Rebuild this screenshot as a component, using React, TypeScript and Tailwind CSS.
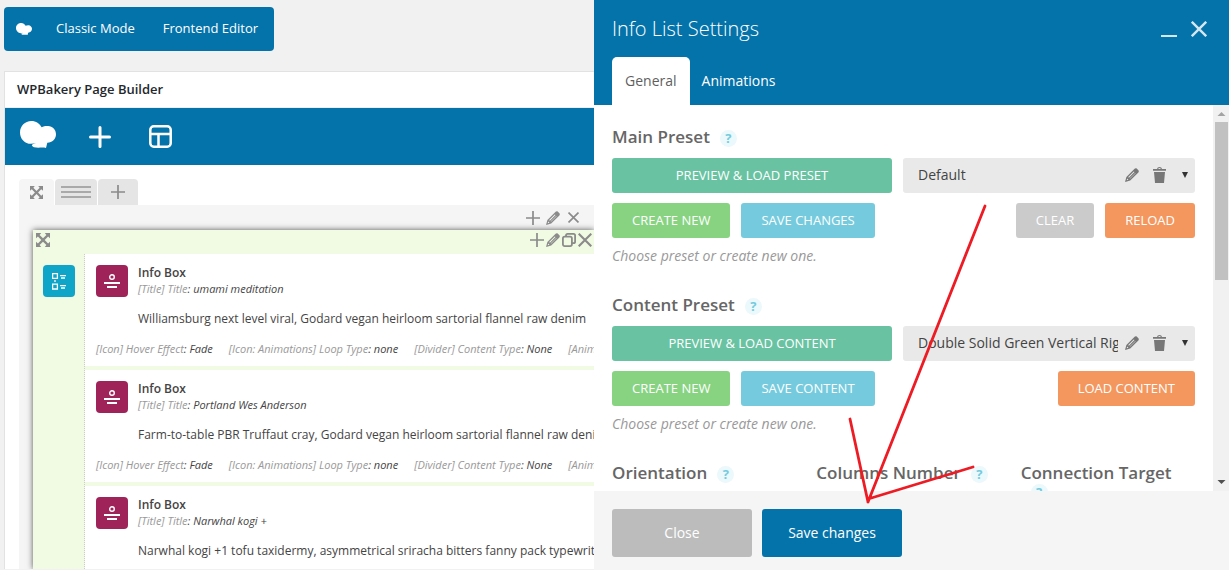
import type { ReactNode } from "react";

const infoBoxes = [
  {
    title: "umami meditation",
    text: "Williamsburg next level viral, Godard vegan heirloom sartorial flannel raw denim",
  },
  {
    title: "Portland Wes Anderson",
    text: "Farm-to-table PBR Truffaut cray, Godard vegan heirloom sartorial flannel raw denim",
  },
  {
    title: "Narwhal kogi +",
    text: "Narwhal kogi +1 tofu taxidermy, asymmetrical sriracha bitters fanny pack typewriter",
  },
];

const params = [
  { name: "[Icon] Hover Effect", value: "Fade" },
  { name: "[Icon: Animations] Loop Type", value: "none" },
  { name: "[Divider] Content Type", value: "None" },
  { name: "[Animations] Type", value: "none" },
];

function Logo({ className }: { className: string }) {
  return (
    <svg viewBox="0 0 36 27" fill="currentColor" className={className} aria-hidden="true">
      <path d="M11.3 0C16 0 19.800 2.600 21.600 6.200C23.500 5.100 25.600 4.800 28 4.900C32.600 5.200 36 8.600 36 13.200C36 18 32.300 21.600 27.300 21.800L26 27C22.500 25.900 18.500 27.300 14 26.200C12.400 25.700 11.600 24.800 12 23.800C13 22.700 14.800 22.500 16.300 21.700C14.800 22.400 13 22.800 11 22.800C4.800 22.800 0 17.700 0 11.400C0 5 5 0 11.300 0Z" />
    </svg>
  );
}

function PlusIcon({ className }: { className: string }) {
  return (
    <svg viewBox="0 0 14 14" className={className} fill="none" stroke="currentColor" strokeWidth="1.700" aria-hidden="true">
      <path d="M7 0V14M0 7H14" />
    </svg>
  );
}

function CloseIcon({ className }: { className: string }) {
  return (
    <svg viewBox="0 0 14 14" className={className} fill="none" stroke="currentColor" strokeWidth="2.100" aria-hidden="true">
      <path d="M.7.7L13.300 13.300M13.300.7L.7 13.300" />
    </svg>
  );
}

function PencilIcon({ className }: { className: string }) {
  return (
    <svg viewBox="0 0 14 14" className={className} aria-hidden="true">
      <path
        fill="currentColor"
        fillRule="evenodd"
        d="M9.600.7C10.300 0 11 0 11.700.6L13.400 2.300C14 3 14 3.700 13.400 4.400L5.200 12.500L0 14L1.400 8.900ZM8.800 3.400L3.200 9L3.900 9.700L9.500 4.100ZM10.300 4.900L4.700 10.500L5 10.800L10.600 5.200ZM2.200 10.500L1.700 12.300L3.500 11.800Z"
      />
    </svg>
  );
}

function CopyIcon({ className }: { className: string }) {
  return (
    <svg viewBox="0 0 14 14" className={className} fill="none" stroke="currentColor" strokeWidth="1.800" aria-hidden="true">
      <rect x="0.900" y="3.600" width="9" height="9.500" rx="1.800" />
      <path d="M4 3.500V2.500Q4 .9 5.600.9H11.500Q13.100.9 13.100 2.500V8.500Q13.100 10.200 11.500 10.200H10" />
    </svg>
  );
}

function TrashIcon({ className }: { className: string }) {
  return (
    <svg viewBox="0 0 13 16" className={className} aria-hidden="true">
      <path
        fill="currentColor"
        fillRule="evenodd"
        d="M4 2Q4.300 0 6.500 0T9 2H13V3.800H0V2ZM5.200 2H7.800Q7.600 1 6.500 1T5.200 2ZM1 5H12L11 16H2Z"
      />
    </svg>
  );
}

function MoveIcon({ className }: { className: string }) {
  return (
    <svg viewBox="0 0 14 14" className={className} fill="currentColor" aria-hidden="true">
      <path d="M0 0H5.200L3.600 1.900L7 5.300L10.400 1.900L8.800 0H14V5.200L12.100 3.600L8.700 7L12.100 10.400L14 8.800V14H8.800L10.400 12.100L7 8.700L3.600 12.100L5.200 14H0V8.800L1.900 10.400L5.300 7L1.900 3.600L0 5.200Z" />
    </svg>
  );
}

function IconButton({ label, children }: { label: string; children: ReactNode }) {
  return (
    <button type="button" aria-label={label} className="flex items-center justify-center">
      {children}
    </button>
  );
}

function InfoBox({ title, text }: { title: string; text: string }) {
  return (
    <article className="h-28 shrink-0 overflow-hidden whitespace-nowrap bg-white pl-[11px] pt-[11px]">
      <div className="flex gap-2.5">
        <div className="flex h-8 w-8 shrink-0 items-center justify-center rounded bg-[#9f2259] text-white">
          <svg viewBox="0 0 16 14" className="h-3.5 w-4" aria-hidden="true">
            <circle cx="8" cy="3" r="2.300" fill="none" stroke="currentColor" strokeWidth="1.400" />
            <path d="M0 8H16V10H0ZM3 12H13V14H3Z" fill="currentColor" />
          </svg>
        </div>
        <div>
          <h3 className="text-xs font-semibold leading-4 text-[#444]">Info Box</h3>
          <p className="text-[11px] italic leading-4 text-[#444]">
            <span className="text-[#999]">[Title] Title</span>: {title}
          </p>
        </div>
      </div>
      <p className="pl-[42px] pt-3 text-xs leading-5 text-[#444]">{text}</p>
      <ul className="flex gap-4 pt-3 text-[11px] italic leading-4 text-[#444]">
        {params.map((p) => (
          <li key={p.name}>
            <span className="text-[#999]">{p.name}</span>: {p.value}
          </li>
        ))}
      </ul>
    </article>
  );
}

function Editor() {
  return (
    <main className="flex min-w-0 flex-col overflow-hidden bg-[#f1f1f1] pb-px pl-1 pt-[7px] font-['Open_Sans',sans-serif]">
      <nav className="flex h-11 items-center self-start rounded bg-[#0473aa] pl-3 pr-4 text-[13px] text-white">
        <Logo className="h-3 w-4" />
        <a href="#classic" className="ml-6">Classic Mode</a>
        <a href="#frontend" className="ml-7">Frontend Editor</a>
      </nav>

      <section className="mt-5 flex min-h-0 flex-1 flex-col border-l border-t border-[#e2e2e2] bg-white">
        <h2 className="flex h-9 shrink-0 items-center border-b border-[#eee] pl-3 text-[13px] font-semibold text-[#23282d]">
          WPBakery Page Builder
        </h2>
        <div className="flex h-[57px] shrink-0 items-center bg-[#0473aa] text-white">
          <a href="#home" aria-label="Home" className="flex w-[65px] justify-center pb-1">
            <Logo className="h-[27px] w-9" />
          </a>
          <button type="button" aria-label="Add element" className="flex h-full w-[60px] items-center justify-center bg-[#0471a7]">
            <svg viewBox="0 0 22 22" className="h-[22px] w-[22px]" fill="none" stroke="currentColor" strokeWidth="3" strokeLinecap="round">
              <path d="M11 1.500V20.500M1.500 11H20.500" />
            </svg>
          </button>
          <button type="button" aria-label="Templates" className="flex h-full w-[60px] items-center justify-center">
            <svg viewBox="0 0 23 23" className="h-[23px] w-[23px]" fill="none" stroke="currentColor" strokeWidth="2.500">
              <rect x="1.300" y="1.300" width="20.400" height="20.400" rx="3.500" />
              <path d="M1 9H22M9.500 9V22" />
            </svg>
          </button>
        </div>

        <div className="mt-3.5 flex min-h-0 flex-1 flex-col pl-3.5">
          <div className="flex h-[26px] shrink-0 gap-px text-[#8b8b8b]">
            <button type="button" aria-label="Move row" className="flex w-[35px] items-center justify-center rounded-t-sm bg-[#f5f5f5]">
              <MoveIcon className="h-[13px] w-[13px]" />
            </button>
            <button type="button" aria-label="Row layout" className="flex w-[42px] flex-col items-center justify-center gap-[3px] rounded-t-sm bg-[#e5e5e5]">
              <span className="h-0.5 w-[30px] bg-[#a9a9a9]" />
              <span className="h-0.5 w-[30px] bg-[#a9a9a9]" />
              <span className="h-0.5 w-[30px] bg-[#a9a9a9]" />
            </button>
            <button type="button" aria-label="Add column" className="flex w-10 items-center justify-center rounded-t-sm bg-[#e5e5e5]">
              <PlusIcon className="h-3.5 w-3.5" />
            </button>
          </div>

          <div className="flex min-h-0 flex-1 flex-col overflow-hidden bg-[#f5f5f5] pl-3.5">
            <div className="flex h-[25px] shrink-0 items-center justify-end gap-1.5 pr-[15px] text-[#8b8b8b]">
              <IconButton label="Add">
                <PlusIcon className="h-3.5 w-3.5" />
              </IconButton>
              <IconButton label="Edit column">
                <PencilIcon className="h-3.5 w-3.5" />
              </IconButton>
              <IconButton label="Delete column">
                <CloseIcon className="ml-0.5 h-[11px] w-[11px]" />
              </IconButton>
            </div>

            <div className="flex min-h-0 flex-1 flex-col bg-[#f1fae3] shadow-[0_0_6px_#555]">
              <div className="flex h-6 shrink-0 items-center justify-between pb-1 pl-[3px] pr-0.5 text-[#8b8b8b]">
                <IconButton label="Move element">
                  <MoveIcon className="h-3.5 w-3.5" />
                </IconButton>
                <div className="flex gap-0.5">
                  <IconButton label="Add">
                    <PlusIcon className="h-3.5 w-3.5" />
                  </IconButton>
                  <IconButton label="Edit element">
                    <PencilIcon className="h-3.5 w-3.5" />
                  </IconButton>
                  <IconButton label="Clone element">
                    <CopyIcon className="h-3.5 w-3.5" />
                  </IconButton>
                  <IconButton label="Delete element">
                    <CloseIcon className="h-3.5 w-3.5" />
                  </IconButton>
                </div>
              </div>
              <div className="flex min-h-0 flex-1">
                <div className="w-[51px] shrink-0 pl-2.5 pt-[11px]">
                  <div className="flex h-8 w-8 items-center justify-center rounded bg-[#0ea5c9] text-white">
                    <svg viewBox="0 0 14 17" className="h-[17px] w-3.5" fill="none" stroke="currentColor" strokeWidth="1.300" aria-hidden="true">
                      <path d="M.6.6H5.400V5.400H.6ZM.6 11.200H5.400V16H.6ZM3 7V9M8 2.600H14M9 5H13M8 12.600H14M9 15H13" />
                    </svg>
                  </div>
                </div>
                <div className="flex min-w-0 flex-1 flex-col gap-1 overflow-hidden border-l border-dotted border-[#ccc]">
                  {infoBoxes.map((box) => (
                    <InfoBox key={box.title} title={box.title} text={box.text} />
                  ))}
                </div>
              </div>
            </div>
          </div>
        </div>
      </section>
    </main>
  );
}

function Help({ label }: { label: string }) {
  return (
    <button
      type="button"
      aria-label={`Help: ${label}`}
      className="ml-2.5 inline-block h-[17px] w-[17px] rounded-full bg-[#ebf8fc] text-center align-middle text-[13px] font-bold leading-[17px] text-[#75cbdd]"
    >
      ?
    </button>
  );
}

function ParamTitle({ children }: { children: string }) {
  return (
    <h3 className="text-[17px] font-semibold leading-[18px] text-[#666]">
      {children}
      <wbr />
      <Help label={children} />
    </h3>
  );
}

function ActionButton({ color, children }: { color: string; children: string }) {
  return (
    <button type="button" className={`h-[35px] whitespace-nowrap rounded-[3px] px-5 text-[13px] text-white ${color}`}>
      {children}
    </button>
  );
}

type PresetProps = {
  title: string;
  preview: string;
  option: string;
  save: string;
  actions: ReactNode;
};

function Preset({ title, preview, option, save, actions }: PresetProps) {
  return (
    <section className="mb-[30px]">
      <ParamTitle>{title}</ParamTitle>
      <div className="mt-[11px] grid grid-cols-[280fr_292fr] gap-[11px]">
        <ActionButton color="bg-[#69c3a2]">{preview}</ActionButton>
        <div className="relative min-w-0">
          <select
            aria-label={title}
            className="h-[35px] w-full appearance-none rounded-[3px] bg-[#e9e9e9] pl-[15px] pr-[77px] text-sm text-[#444]"
          >
            <option>{option}</option>
          </select>
          <div className="absolute inset-y-0 right-[7px] flex items-center text-[#777]">
            <IconButton label="Rename preset">
              <PencilIcon className="h-3.5 w-3.5" />
            </IconButton>
            <IconButton label="Delete preset">
              <TrashIcon className="ml-3.5 h-4 w-[13px]" />
            </IconButton>
            <svg viewBox="0 0 6 6" className="ml-4 h-1.5 w-1.5 text-[#333]" fill="currentColor" aria-hidden="true">
              <path d="M0 0H6L3 6Z" />
            </svg>
          </div>
        </div>
      </div>
      <div className="mt-2.5 flex gap-[11px]">
        <ActionButton color="bg-[#88d382]">CREATE NEW</ActionButton>
        <ActionButton color="bg-[#75cbdd]">{save}</ActionButton>
        <div className="ml-auto flex gap-[11px]">{actions}</div>
      </div>
      <p className="mt-2 text-sm italic leading-5 text-[#999]">Choose preset or create new one.</p>
    </section>
  );
}

function Scrollbar() {
  return (
    <div className="flex w-4 shrink-0 flex-col items-center bg-[#f1f1f1]" aria-hidden="true">
      <svg viewBox="0 0 16 17" className="h-[17px] w-4 shrink-0" fill="#a3a3a3">
        <path d="M4.500 11L8.500 7L12.500 11Z" />
      </svg>
      <div className="h-[41%] w-[13px] bg-[#c1c1c1]" />
      <svg viewBox="0 0 16 17" className="mt-auto h-[17px] w-4 shrink-0" fill="#505050">
        <path d="M4.500 6L8.500 10L12.500 6Z" />
      </svg>
    </div>
  );
}

function SettingsPanel() {
  return (
    <aside className="flex min-w-0 flex-col overflow-hidden bg-white font-['Open_Sans',sans-serif]">
      <header className="shrink-0 bg-[#0473aa] px-[18px] text-white">
        <div className="flex h-[57px] items-center justify-between pr-1">
          <h2 className="text-xl font-light">Info List Settings</h2>
          <div className="flex gap-3.5 text-[#d5e7f0]">
            <IconButton label="Minimize">
              <span className="mt-3.5 h-0.5 w-4 bg-current" />
            </IconButton>
            <IconButton label="Close panel">
              <CloseIcon className="h-4 w-4" />
            </IconButton>
          </div>
        </div>
        <div role="tablist" className="flex h-12 text-sm">
          <button type="button" role="tab" aria-selected="true" className="rounded-t-[5px] bg-white px-[13px] text-[#5f5f5f]">
            General
          </button>
          <button type="button" role="tab" aria-selected="false" className="px-3">
            Animations
          </button>
        </div>
      </header>

      <div className="flex min-h-0 flex-1">
        <div className="min-w-0 flex-1 overflow-hidden px-[18px] pt-[23px]">
          <Preset
            title="Main Preset"
            preview="PREVIEW & LOAD PRESET"
            option="Default"
            save="SAVE CHANGES"
            actions={
              <>
                <ActionButton color="bg-[#cbcbcb]">CLEAR</ActionButton>
                <ActionButton color="bg-[#f3975f]">RELOAD</ActionButton>
              </>
            }
          />
          <Preset
            title="Content Preset"
            preview="PREVIEW & LOAD CONTENT"
            option="Double Solid Green Vertical Right"
            save="SAVE CONTENT"
            actions={<ActionButton color="bg-[#f3975f]">LOAD CONTENT</ActionButton>}
          />
          <div className="grid grid-cols-3 gap-[30px]">
            <ParamTitle>Orientation</ParamTitle>
            <ParamTitle>Columns Number</ParamTitle>
            <ParamTitle>Connection Target</ParamTitle>
          </div>
        </div>
        <Scrollbar />
      </div>

      <footer className="flex shrink-0 gap-2.5 bg-[#f5f5f5] px-[18px] pb-[13px] pt-[18px] text-sm text-white">
        <button type="button" className="h-12 w-[140px] rounded-[3px] bg-[#bcbcbc]">
          Close
        </button>
        <button type="button" className="h-12 w-[140px] rounded-[3px] bg-[#0473aa]">
          Save changes
        </button>
      </footer>
    </aside>
  );
}

export default function App() {
  return (
    <div className="relative grid h-screen grid-cols-[594fr_635fr] grid-rows-1 overflow-hidden">
      <Editor />
      <SettingsPanel />
      {/* hand-drawn arrow pointing at the save button */}
      <svg
        viewBox="0 0 1229 570"
        className="pointer-events-none absolute inset-0 h-full w-full"
        fill="none"
        stroke="#ed1c24"
        strokeWidth="2.800"
        strokeLinecap="round"
        aria-hidden="true"
      >
        <path d="M985 206L868 502M850 419L868 502M973 467L868 499" />
      </svg>
    </div>
  );
}
